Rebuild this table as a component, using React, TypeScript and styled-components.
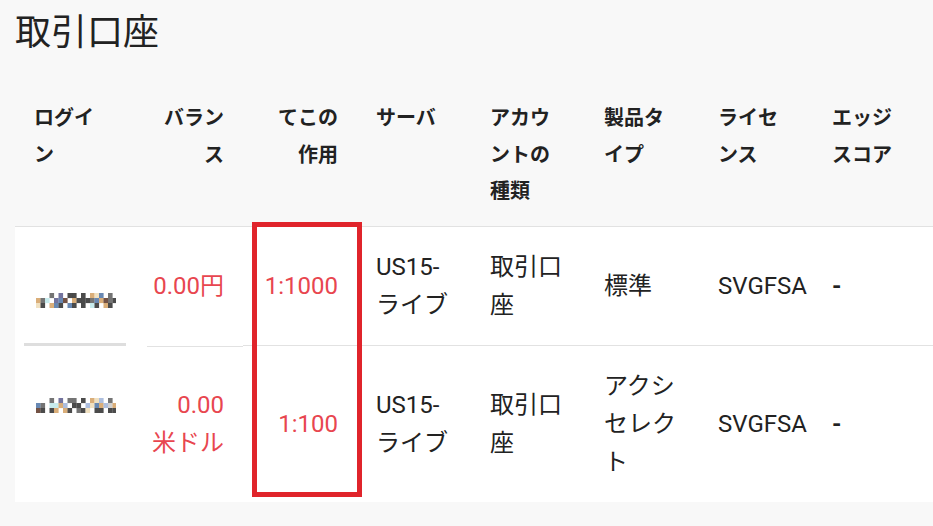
import React from "react";
import styled, { createGlobalStyle } from "styled-components";

const Global = createGlobalStyle`
  html, body { margin: 0; padding: 0; background: #f8f8f8; }
  body { font-family: Roboto, "Noto Sans CJK JP", sans-serif; color: #222; overflow: hidden; }
`;

const Page = styled.div`
  width: 933px;
  height: 526px;
  padding-left: 15px;
  box-sizing: border-box;
  overflow: hidden;
`;

const Title = styled.h1`
  margin: 11px 0 0;
  font-size: 36px;
  line-height: 44px;
  font-weight: 400;
  color: #222;
`;

const TableWrap = styled.div`
  position: relative;
  margin-top: 25px;
  width: 1100px;
`;

const Table = styled.table`
  border-collapse: collapse;
  table-layout: fixed;
  width: 1026px;
`;

const Col = styled.col`
  width: 114px;
`;

const Th = styled.th<{ $align?: "left" | "right" }>`
  padding: 20px 19px 16.5px;
  font-size: 20px;
  line-height: 36.5px;
  font-weight: 700;
  text-align: ${(p) => p.$align ?? "left"};
  vertical-align: top;
  color: #222;
`;

const BodyRow = styled.tr`
  background: #fff;
`;

const Td = styled.td<{ $align?: "left" | "right"; $red?: boolean; $line?: "full" | "none" | "partial" }>`
  padding: 21px 19px;
  font-size: 24px;
  line-height: 38px;
  font-weight: 400;
  text-align: ${(p) => p.$align ?? "left"};
  vertical-align: middle;
  color: ${(p) => (p.$red ? "#e8464f" : "#222")};
  border-top: 1px solid ${(p) => (p.$line === "full" || !p.$line ? "#e2e2e2" : "transparent")};
  background: ${(p) =>
    p.$line === "partial"
      ? "linear-gradient(#e2e2e2, #e2e2e2) no-repeat 18px 0 / 100% 1px, #fff"
      : "#fff"};
  background-origin: border-box;
  background-clip: border-box;
`;

const NoWrap = styled.span`
  white-space: nowrap;
`;

const LoginTd = styled.td<{ $offset: number; $bar?: boolean; $line?: boolean }>`
  padding: ${(p) => p.$offset}px 19px 0 21px;
  vertical-align: top;
  background: ${(p) =>
    p.$bar ? "linear-gradient(#dedede, #dedede) no-repeat 9px calc(100% + 1px) / 102px 3px, #fff" : "#fff"};
  border-top: 1px solid ${(p) => (p.$line ? "#e2e2e2" : "transparent")};
  line-height: 0;
`;

const Dash = styled.span`
  font-weight: 700;
`;

const Highlight = styled.div`
  position: absolute;
  left: 237px;
  top: 142px;
  width: 110px;
  height: 275px;
  box-sizing: border-box;
  border: 5px solid #e0242b;
  pointer-events: none;
`;

const palette: Record<string, string> = {
  d: "#2b2b2b",
  g: "#5c5c5c",
  t: "#d3a062",
  l: "#efdcb6",
  b: "#4d73a6",
  c: "#bde8ea",
  p: "#5a5a8c",
  r: "#5b3424",
  s: "#9fb3d8",
  y: "#c8c8c8",
};

const Pixels: React.FC<{ rows: string[] }> = ({ rows }) => (
  <svg width="80" height="15" viewBox="0 0 80 15">
    {rows.map((row, y) =>
      row.split("").map((ch, x) =>
        palette[ch] ? (
          <rect key={`${x}-${y}`} x={x * 4.5} y={y * 5} width="4.6" height="5.1" fill={palette[ch]} opacity={0.85} />
        ) : null
      )
    )}
  </svg>
);

const login1 = [
  "...g.p.dd.d.tlb.g.",
  "tgc.pbr.tdddgbtrgd",
  "ld.tbd.bd.d.cd.td.",
];
const login2 = [
  "...g.p.gg.d.tls.g.",
  "bg.ccts.dd.slbtsyt",
  "rd.dt.td.gdl.dd.dd",
];

export default function App() {
  return (
    <Page>
      <Global />
      <Title>取引口座</Title>
      <TableWrap>
        <Table>
          <colgroup>
            <Col /><Col /><Col /><Col /><Col /><Col /><Col /><Col /><Col />
          </colgroup>
          <thead>
            <tr>
              <Th>ログイン</Th>
              <Th $align="right">バランス</Th>
              <Th $align="right">てこの作用</Th>
              <Th>サーバ</Th>
              <Th>アカウントの種類</Th>
              <Th>製品タイプ</Th>
              <Th>ライセンス</Th>
              <Th>エッジスコア</Th>
              <Th />
            </tr>
          </thead>
          <tbody>
            <BodyRow>
              <LoginTd $offset={66} $bar $line>
                <Pixels rows={login1} />
              </LoginTd>
              <Td $align="right" $red>0.00円</Td>
              <Td $align="right" $red>1:1000</Td>
              <Td>US15-ライブ</Td>
              <Td>取引口座</Td>
              <Td>標準</Td>
              <Td>SVGFSA</Td>
              <Td><Dash>-</Dash></Td>
              <Td />
            </BodyRow>
            <BodyRow>
              <LoginTd $offset={52}>
                <Pixels rows={login2} />
              </LoginTd>
              <Td $align="right" $red $line="partial">0.00 <NoWrap>米ドル</NoWrap></Td>
              <Td $align="right" $red>1:100</Td>
              <Td>US15-ライブ</Td>
              <Td>取引口座</Td>
              <Td>アクシセレクト</Td>
              <Td>SVGFSA</Td>
              <Td><Dash>-</Dash></Td>
              <Td />
            </BodyRow>
          </tbody>
        </Table>
        <Highlight />
      </TableWrap>
    </Page>
  );
}
